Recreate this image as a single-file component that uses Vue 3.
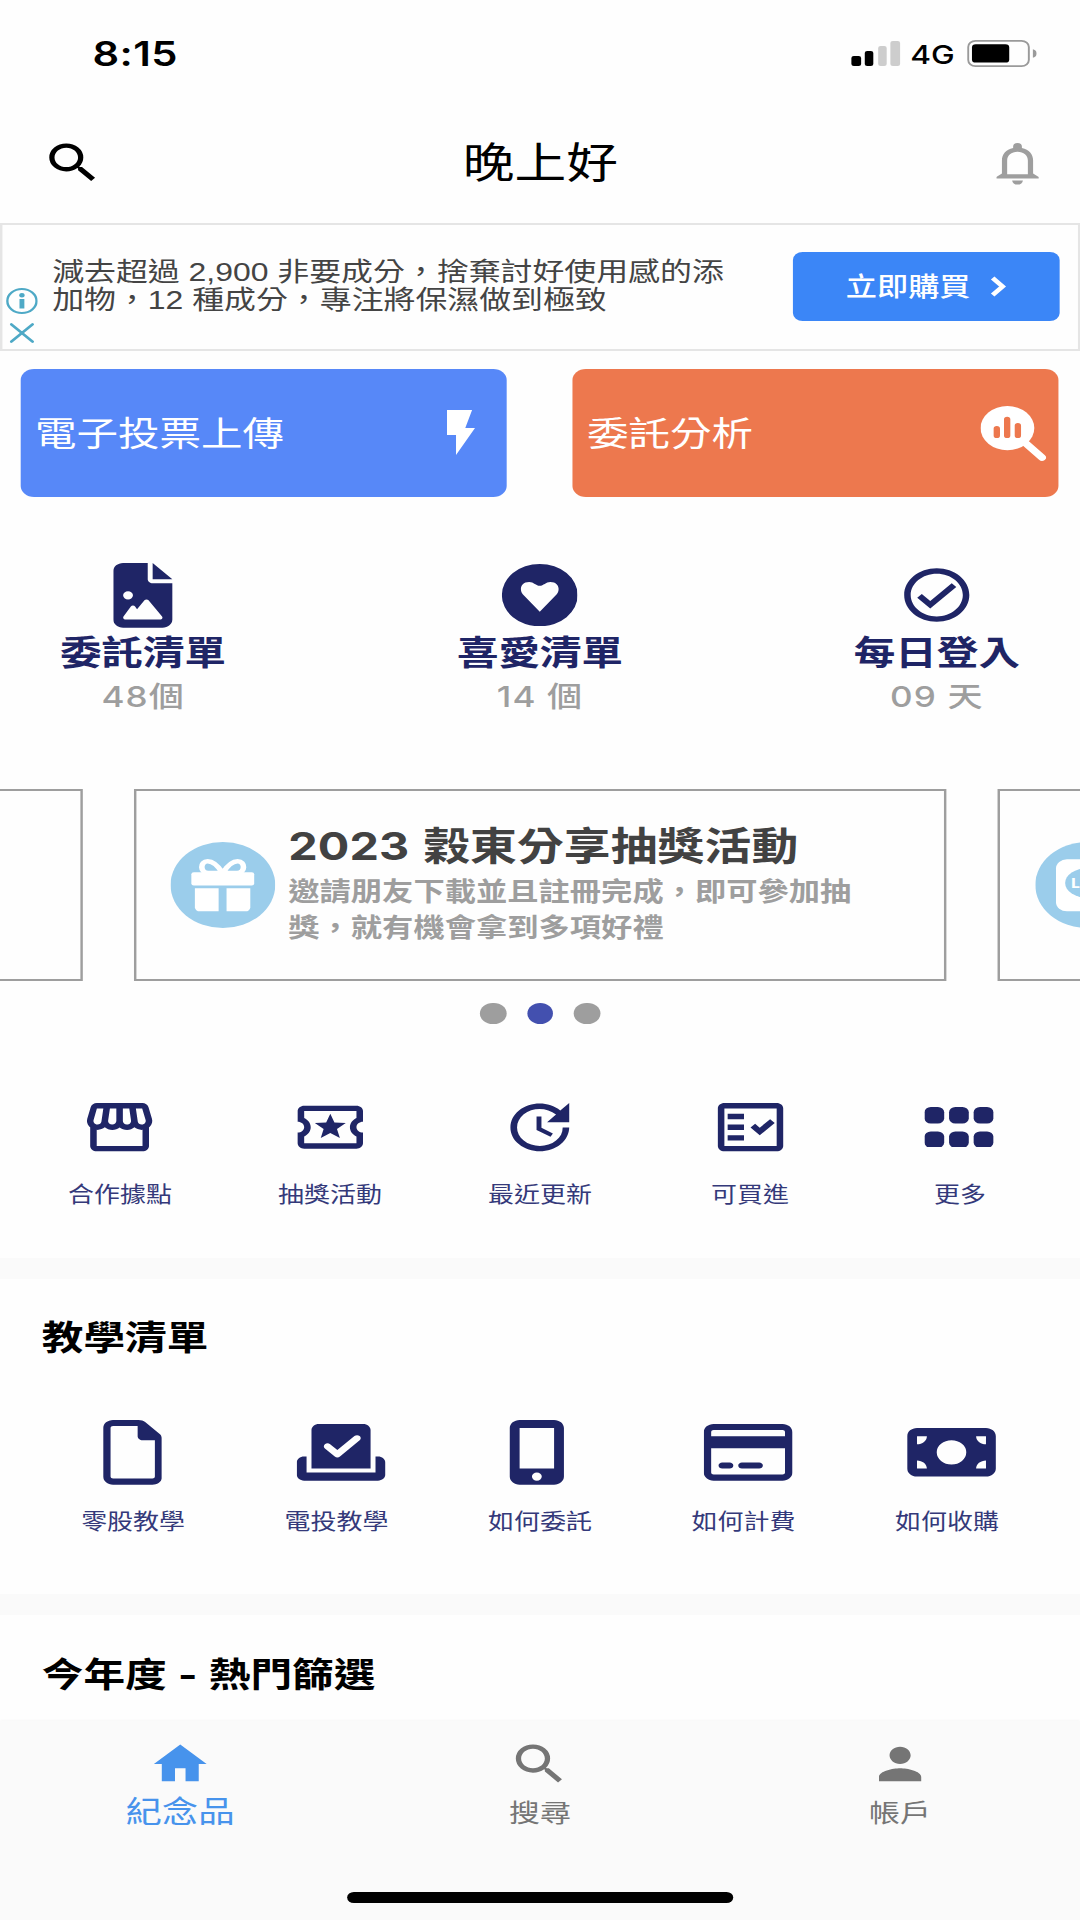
<script setup>
const stats = [
  {
    label: '委託清單',
    value: '48個',
    viewBox: '0 0 384 512',
    width: 48.5,
    height: 64.7,
    path: 'M64 0C28.7 0 0 28.7 0 64V448c0 35.3 28.7 64 64 64H320c35.3 0 64-28.7 64-64V160H256c-17.7 0-32-14.3-32-32V0H64zM256 0V128H384L256 0zM64 256a32 32 0 1 1 64 0 32 32 0 1 1 -64 0zm152 32c5.3 0 10.2 2.6 13.2 6.9l88 128c3.4 4.9 3.7 11.3 1 16.5s-8.2 8.6-14.2 8.6H216 176 128 80c-5.8 0-11.1-3.1-13.9-8.1s-2.8-11.2 .2-16.1l48-80c2.9-4.8 8.1-7.8 13.7-7.8s10.8 2.9 13.7 7.8l12.8 21.4 48.3-70.2c3-4.3 7.9-6.9 13.2-6.9z',
  },
  {
    label: '喜愛清單',
    value: '14 個',
    viewBox: '0 0 62 62',
    width: 62.3,
    height: 62.3,
    path: 'M31 0a31 31 0 1 0 0 62a31 31 0 1 0 0-62zM31 47.6L17.3 30.3C14.2 26.2 15 17.8 22.4 17.8C26 17.8 28 21.6 31 21.6S36 17.8 39.6 17.8C47 17.8 47.8 26.2 44.7 30.3Z',
  },
  {
    label: '每日登入',
    value: '09 天',
    viewBox: '0 0 24 24',
    width: 64.2,
    height: 64.2,
    path: 'M12 2C6.48 2 2 6.48 2 12s4.48 10 10 10 10-4.48 10-10S17.52 2 12 2zm0 18c-4.41 0-8-3.59-8-8s3.59-8 8-8 8 3.59 8 8-3.59 8-8 8zm4.59-12.42L10 14.17l-2.59-2.58L6 13l4 4 8-8z',
  },
]

const shortcuts = [
  {
    label: '合作據點',
    path: 'M21.9 8.89l-1.05-4.37c-.22-.9-1-1.52-1.91-1.52H5.05c-.9 0-1.69.63-1.9 1.52L2.1 8.89c-.24 1.02-.02 2.06.62 2.88.08.11.19.19.28.29V19c0 1.1.9 2 2 2h14c1.1 0 2-.9 2-2v-6.94c.09-.09.2-.18.28-.28.64-.82.87-1.87.62-2.89zm-2.99-3.9l1.05 4.37c.1.42.01.84-.25 1.17-.14.18-.44.47-.94.47-.61 0-1.14-.49-1.21-1.14L16.98 5l1.93-.01zM13 5h1.96l.54 4.52c.05.39-.07.78-.33 1.07-.22.26-.54.41-.95.41-.67 0-1.22-.59-1.22-1.31V5zM8.49 9.52L9.04 5H11v4.69c0 .72-.55 1.31-1.29 1.31-.34 0-.65-.15-.89-.41-.25-.29-.37-.68-.33-1.07zm-4.45-.16L5.05 5h1.97l-.58 4.86c-.08.65-.6 1.14-1.21 1.14-.49 0-.8-.29-.93-.47-.27-.32-.36-.75-.26-1.17zM5 19v-6.03c.08.01.15.03.23.03.87 0 1.66-.36 2.24-.95.6.6 1.4.95 2.31.95.87 0 1.65-.36 2.23-.93.59.57 1.39.93 2.29.93.84 0 1.64-.35 2.24-.95.58.59 1.37.95 2.24.95.08 0 .15-.02.23-.03V19H5z',
  },
  {
    label: '抽獎活動',
    path: 'M22 10V6c0-1.11-.9-2-2-2H4c-1.1 0-1.99.89-1.99 2v4c1.1 0 1.99.9 1.99 2s-.89 2-2 2v4c0 1.1.9 2 2 2h16c1.1 0 2-.9 2-2v-4c-1.1 0-2-.9-2-2s.9-2 2-2zm-2-1.46c-1.19.69-2 1.99-2 3.46s.81 2.77 2 3.46V18H4v-2.54c1.19-.69 2-1.99 2-3.46 0-1.48-.8-2.77-1.99-3.46L4 6h16v2.54zM9.07 16L12 14.12 14.93 16l-.89-3.36 2.69-2.2-3.47-.21L12 7l-1.27 3.22-3.47.21 2.69 2.2z',
  },
  {
    label: '最近更新',
    path: 'M21 10.12h-6.78l2.74-2.82c-2.73-2.7-7.15-2.8-9.88-.1-2.73 2.71-2.73 7.08 0 9.79s7.15 2.71 9.88 0C18.32 15.65 19 14.08 19 12.1h2c0 1.98-.88 4.55-2.64 6.29-3.51 3.48-9.21 3.48-12.72 0-3.5-3.47-3.53-9.11-.02-12.58s9.14-3.47 12.65 0L21 3v7.12zM12.5 8v4.25l3.5 2.08-.72 1.21L11 13V8h1.5z',
  },
  {
    label: '可買進',
    path: 'M20 3H4c-1.1 0-2 .9-2 2v14c0 1.1.9 2 2 2h16c1.1 0 2-.9 2-2V5c0-1.1-.9-2-2-2zm0 16H4V5h16v14zM19.41 10.42L17.99 9l-3.17 3.17-1.41-1.42L12 12.16 14.82 15zM5 7h5v2H5zM5 11h5v2H5zM5 15h5v2H5z',
  },
  { label: '更多', grid: true },
]

const lessons = [
  {
    label: '零股教學',
    width: 384,
    shift: -0.3,
    path: 'M320 464c8.8 0 16-7.2 16-16V160H256c-17.7 0-32-14.3-32-32V48H64c-8.8 0-16 7.2-16 16V448c0 8.8 7.2 16 16 16H320zM0 64C0 28.7 28.7 0 64 0H229.5c17 0 33.3 6.7 45.3 18.7l90.5 90.5c12 12 18.7 28.3 18.7 45.3V448c0 35.3-28.7 64-64 64H64c-35.3 0-64-28.7-64-64V64z',
  },
  {
    label: '電投教學',
    width: 576,
    shift: 3.6,
    path: 'M96 80c0-26.5 21.5-48 48-48H432c26.5 0 48 21.5 48 48V384H96V80zm313 47c-9.4-9.4-24.6-9.4-33.9 0l-111 111-47-47c-9.4-9.4-24.6-9.4-33.9 0s-9.4 24.6 0 33.9l64 64c9.4 9.4 24.6 9.4 33.9 0L409 161c9.4-9.4 9.4-24.6 0-33.9zM0 336c0-26.5 21.5-48 48-48H64V416H512V288h16c26.5 0 48 21.5 48 48v96c0 26.5-21.5 48-48 48H48c-26.5 0-48-21.5-48-48V336z',
  },
  {
    label: '如何委託',
    width: 384,
    shift: -2.5,
    path: 'M16 64C16 28.7 44.7 0 80 0H304c35.3 0 64 28.7 64 64V448c0 35.3-28.7 64-64 64H80c-35.3 0-64-28.7-64-64V64zM224 448a32 32 0 1 0 -64 0 32 32 0 1 0 64 0zM304 64H80V384H304V64z',
  },
  {
    label: '如何計費',
    width: 576,
    shift: 3.8,
    path: 'M512 80c8.8 0 16 7.2 16 16v32H48V96c0-8.8 7.2-16 16-16H512zm16 144V416c0 8.8-7.2 16-16 16H64c-8.8 0-16-7.2-16-16V224H528zM64 32C28.7 32 0 60.7 0 96V416c0 35.3 28.7 64 64 64H512c35.3 0 64-28.7 64-64V96c0-35.3-28.7-64-64-64H64zm56 304c-13.3 0-24 10.7-24 24s10.7 24 24 24h48c13.3 0 24-10.7 24-24s-10.7-24-24-24H120zm128 0c-13.3 0-24 10.7-24 24s10.7 24 24 24H360c13.3 0 24-10.7 24-24s-10.7-24-24-24H248z',
  },
  {
    label: '如何收購',
    width: 576,
    shift: 3.8,
    path: 'M64 64C28.7 64 0 92.7 0 128V384c0 35.3 28.7 64 64 64H512c35.3 0 64-28.7 64-64V128c0-35.3-28.7-64-64-64H64zm64 320H64V320c35.3 0 64 28.7 64 64zM64 192V128h64c0 35.3-28.7 64-64 64zM448 384c0-35.3 28.7-64 64-64v64H448zm64-192c-35.3 0-64-28.7-64-64h64v64zM288 160a96 96 0 1 1 0 192 96 96 0 1 1 0-192z',
  },
]

const searchPath =
  'M15.5 14h-.79l-.28-.27A6.471 6.471 0 0 0 16 9.5 6.5 6.5 0 1 0 9.5 16c1.61 0 3.09-.59 4.23-1.57l.27.28v.79l5 4.99L20.49 19l-4.99-5zm-6 0C7.01 14 5 11.99 5 9.5S7.01 5 9.5 5 14 7.01 14 9.5 11.99 14 9.5 14z'

const tabs = [
  { label: '紀念品', active: true, path: 'M10 20v-6h4v6h5v-8h3L12 3 2 12h3v8z' },
  { label: '搜尋', path: searchPath },
  {
    label: '帳戶',
    path: 'M12 12c2.21 0 4-1.79 4-4s-1.79-4-4-4-4 1.79-4 4 1.79 4 4 4zm0 2c-2.67 0-8 1.34-8 4v2h16v-2c0-2.66-5.33-4-8-4z',
  },
]
</script>

<template>
  <div class="viewport">
    <div class="screen" lang="zh-Hant">
      <div class="status">
        <span class="clock">8:15</span>
        <div class="signal">
          <i class="bar b1"></i><i class="bar b2"></i><i class="bar b3"></i><i class="bar b4"></i>
        </div>
        <span class="network">4G</span>
        <svg class="battery" width="57.3" height="27" viewBox="0 0 57.3 27">
          <rect x="0.9" y="0.9" width="49.8" height="25.2" rx="6" fill="none" stroke="#9a9a9a" stroke-width="1.6" />
          <rect x="4" y="4.2" width="30.6" height="18.4" rx="3.2" />
          <path d="M54 9.3c2.4.9 3.3 2.4 3.3 4.2s-.9 3.3-3.3 4.2z" fill="#9a9a9a" />
        </svg>
      </div>

      <header class="header">
        <svg class="search" width="51.6" height="51.6" viewBox="0 0 24 24"><path :d="searchPath" /></svg>
        <h1>晚上好</h1>
        <svg class="bell" width="34.8" height="41.6" viewBox="0 0 34.8 41.6">
          <path fill-rule="evenodd" d="M17.4 0a3.6 3.6 0 0 1 3.6 3.6v1.3C27 6.5 30.2 11.4 30.2 17.5V30.6L34.8 34v1.5H0V34L4.6 30.6V17.5C4.6 11.4 7.8 6.5 13.8 4.9V3.6A3.6 3.6 0 0 1 17.4 0ZM8.9 31.2H25.9V17.5C25.9 12.5 22.5 8.8 17.4 8.8S8.9 12.5 8.9 17.5Z" />
          <path d="M13 37.6H21.8A4.4 4 0 0 1 13 37.6Z" />
        </svg>
      </header>

      <section class="ad">
        <div class="ad-marks">
          <svg width="26" height="26" viewBox="0 0 26 26">
            <circle cx="13" cy="13" r="12" fill="none" stroke="#4ea9c6" stroke-width="2" />
            <circle cx="13" cy="7.2" r="2.2" fill="#4ea9c6" />
            <rect x="11" y="11" width="4" height="9.5" fill="#4ea9c6" />
          </svg>
          <svg width="20" height="20" viewBox="0 0 20 20">
            <path d="M1.3 1.3 18.7 18.7M18.7 1.3 1.3 18.7" stroke="#4ea9c6" stroke-width="2.4" stroke-linecap="round" />
          </svg>
        </div>
        <p class="ad-text">減去超過 2,900 非要成分，捨棄討好使用感的添<br />加物，12 種成分，專注將保濕做到極致</p>
        <div class="cta">
          <span>立即購買</span>
          <svg width="13" height="21" viewBox="0 0 13 21">
            <path d="M2 2 10.2 10.5 2 19" fill="none" stroke="#fff" stroke-width="4" />
          </svg>
        </div>
      </section>

      <section class="actions">
        <div class="action blue">
          <span>電子投票上傳</span>
          <svg class="bolt" width="23" height="45" viewBox="0 0 23 45">
            <path d="M0 0H20.6L15 18H23L7.4 45V25H0Z" fill="#fff" />
          </svg>
        </div>
        <div class="action orange">
          <span>委託分析</span>
          <svg class="analysis" width="54" height="55" viewBox="0 0 54 55">
            <path d="M35 35 50.5 51.5" stroke="#fff" stroke-width="6.6" stroke-linecap="round" />
            <circle cx="22.1" cy="22.1" r="22.1" fill="#fff" />
            <path d="M13.4 22.5V29.5M21.9 13.3V29.5M30.7 19.5V29.5" stroke="#ed784e" stroke-width="5.2" stroke-linecap="round" />
          </svg>
        </div>
      </section>

      <section class="stats">
        <div v-for="s in stats" :key="s.label" class="stat">
          <div class="stat-icon">
            <svg :width="s.width" :height="s.height" :viewBox="s.viewBox"><path fill-rule="evenodd" :d="s.path" /></svg>
          </div>
          <strong>{{ s.label }}</strong>
          <span>{{ s.value }}</span>
        </div>
      </section>

      <section class="carousel">
        <article class="slide"></article>
        <article class="slide">
          <svg class="badge" width="86" height="86" viewBox="0 0 86 86">
            <circle cx="43" cy="43" r="43" fill="#9bcdeb" />
            <g fill="#fff">
              <rect x="17.1" y="30.3" width="51.6" height="13.2" rx="2" />
              <path d="M20 46.2H39.5V69.3H24A4 4 0 0 1 20 65.3Z" />
              <path d="M46 46.2H65.5V65.3A4 4 0 0 1 61.5 69.3H46Z" />
            </g>
            <path d="M42.8 31C39 24 35 19.3 30.5 19.3C24 19.3 24 31 31 31ZM42.8 31C46.6 24 50.6 19.3 55.1 19.3C61.6 19.3 61.6 31 54.6 31Z" fill="none" stroke="#fff" stroke-width="4.6" />
          </svg>
          <div class="slide-text">
            <h2>2023 穀東分享抽獎活動</h2>
            <p>邀請朋友下載並且註冊完成，即可參加抽<br />獎，就有機會拿到多項好禮</p>
          </div>
        </article>
        <article class="slide">
          <svg class="badge" width="86" height="86" viewBox="0 0 86 86">
            <circle cx="43" cy="43" r="43" fill="#9bcdeb" />
            <rect x="17" y="17.3" width="52" height="52" rx="9" fill="#fff" />
            <ellipse cx="43" cy="41" rx="18.5" ry="15" fill="#9bcdeb" />
            <text x="29.5" y="45.6" fill="#fff" font-size="12.5" font-weight="800">LINE</text>
          </svg>
        </article>
      </section>
      <div class="dots"><i></i><i class="on"></i><i></i></div>

      <section class="shortcuts">
        <div v-for="s in shortcuts" :key="s.label" class="cell">
          <div class="shortcut-icon">
            <svg v-if="s.grid" class="more" width="56.6" height="40.8" viewBox="0 0 56.6 40.8">
              <template v-for="r in 2" :key="r">
                <rect v-for="c in 3" :key="c" :x="(c - 1) * 20.2" :y="(r - 1) * 24.4" width="16.2" height="16.4" rx="5.2" />
              </template>
            </svg>
            <svg v-else width="64.4" height="64.4" viewBox="0 0 24 24"><path fill-rule="evenodd" :d="s.path" /></svg>
          </div>
          <span>{{ s.label }}</span>
        </div>
      </section>

      <section class="lessons">
        <h3>教學清單</h3>
        <div class="lesson-row">
          <div v-for="l in lessons" :key="l.label" class="cell">
            <div class="lesson-icon">
              <svg :width="l.width * 0.1264" height="64.7" :viewBox="`0 0 ${l.width} 512`" :style="{ transform: `translateX(${l.shift}px)` }">
                <path fill-rule="evenodd" :d="l.path" />
              </svg>
            </div>
            <span>{{ l.label }}</span>
          </div>
        </div>
      </section>

      <section class="trending">
        <h3>今年度 - 熱門篩選</h3>
      </section>

      <nav class="tabs">
        <div v-for="t in tabs" :key="t.label" class="tab" :class="{ active: t.active }">
          <svg width="52" height="52" viewBox="0 0 24 24"><path :d="t.path" /></svg>
          <span>{{ t.label }}</span>
        </div>
        <i class="indicator"></i>
      </nav>
    </div>
  </div>
</template>

<style>
body {
  margin: 0;
  background: #fefefe;
}
</style>

<style scoped>
.viewport {
  width: 1080px;
  height: 1920px;
  overflow: hidden;
}
.screen {
  width: 886.7px;
  height: 1920px;
  transform: scaleX(1.218);
  transform-origin: 0 0;
  display: flex;
  flex-direction: column;
  background: #fefefe;
  color: #000;
  font-family: Inter, "Noto Sans CJK TC", sans-serif;
}
.screen * {
  box-sizing: border-box;
}
h1, h2, h3, p {
  margin: 0;
}
svg {
  display: block;
  flex: none;
}
section, header, .status, .dots {
  flex: none;
}

.status {
  height: 101px;
  padding: 0 35.5px 0 76px;
  display: flex;
  align-items: flex-start;
}
.clock {
  margin-top: 33px;
  font-size: 34.2px;
  line-height: 41px;
  font-weight: 600;
  letter-spacing: 0.3px;
}
.signal {
  margin: 40.5px 0 0 auto;
  height: 25px;
  display: flex;
  align-items: flex-end;
  gap: 3.3px;
}
.bar {
  width: 7.4px;
  border-radius: 2px;
  background: #000;
}
.b1 { height: 10px; }
.b2 { height: 14.5px; }
.b3 { height: 19.5px; background: #cdcdcd; }
.b4 { height: 25px; background: #cdcdcd; }
.network {
  margin: 39px 0 0 8.6px;
  font-size: 26px;
  line-height: 32px;
  font-weight: 500;
}
.battery {
  margin: 39.5px 0 0 10px;
}

.header {
  height: 122px;
  padding: 2px 33.6px 0 34.3px;
  display: flex;
  align-items: center;
  justify-content: space-between;
}
.search { margin-right: -16.8px; }
.bell { fill: #9e9e9e; margin-top: 2px; }
h1 {
  font-size: 42.5px;
  line-height: 56px;
  font-weight: 400;
}

.ad {
  height: 128px;
  border: 2px solid #e5e5e5;
  border-width: 2px 2.4px;
  display: flex;
  align-items: flex-start;
}
.ad-marks {
  width: 26px;
  margin: 63px 0 0 3px;
  display: flex;
  flex-direction: column;
  align-items: center;
  gap: 9px;
}
.ad-text {
  margin: 34px 0 0 11.8px;
  font-family: "Liberation Sans", "Noto Sans CJK TC", sans-serif;
  font-size: 26.2px;
  line-height: 27.8px;
  color: #444;
  white-space: nowrap;
}
.cta {
  width: 218.8px;
  height: 69px;
  margin: 27.4px 15.2px 0 auto;
  border-radius: 8px;
  background: #3b86f7;
  color: #fff;
  display: flex;
  align-items: center;
  justify-content: center;
  gap: 16px;
  font-size: 25.6px;
  line-height: 34px;
  font-weight: 500;
}

.actions {
  padding: 17.7px 17.3px 0;
  display: flex;
  justify-content: space-between;
}
.action {
  width: 399px;
  height: 128.3px;
  border-radius: 11px;
  color: #fff;
  display: flex;
  align-items: center;
  justify-content: space-between;
  font-size: 34.1px;
  line-height: 44px;
  padding-left: 11.5px;
}
.action span {
  margin-top: 2px;
}
.blue { background: #5788f8; }
.orange { background: #ed784e; }
.bolt { margin-right: 26.5px; }
.analysis { margin: 1px 10.5px 0 0; }

.stats {
  height: 291.7px;
  padding: 65px 49px 0;
  display: flex;
  justify-content: space-between;
  fill: #1f2566;
}
.stat {
  width: 137px;
  display: flex;
  flex-direction: column;
  align-items: center;
}
.stat-icon {
  height: 66.6px;
  display: flex;
  align-items: center;
}
.stat strong {
  margin-top: 4.8px;
  font-size: 34.1px;
  line-height: 40px;
  color: #1f2566;
  white-space: nowrap;
}
.stat span {
  margin-top: 7px;
  font-size: 28.8px;
  line-height: 34px;
  letter-spacing: 0.9px;
  font-weight: 500;
  color: #9e9e9e;
  white-space: nowrap;
}

.carousel {
  height: 192.6px;
  display: flex;
  justify-content: center;
  gap: 42.3px;
  overflow: hidden;
}
.slide {
  flex: none;
  width: 667px;
  border: 2px solid #9e9e9e;
  padding: 51px 0 0 28.5px;
  display: flex;
  align-items: flex-start;
}
.slide-text {
  margin: -22px 0 0 10.3px;
  white-space: nowrap;
}
h2 {
  font-size: 38.4px;
  line-height: 52px;
  word-spacing: 2.2px;
  color: #424242;
}
h2::first-line {
  letter-spacing: 0.1px;
}
.slide-text p {
  margin-top: 2.4px;
  font-size: 25.7px;
  line-height: 36px;
  font-weight: 700;
  color: #9e9e9e;
}

.dots {
  height: 42.9px;
  padding-top: 21.4px;
  display: flex;
  justify-content: center;
  gap: 17px;
}
.dots i {
  width: 21.5px;
  height: 21.5px;
  border-radius: 50%;
  background: #9e9e9e;
}
.dots .on { background: #4350af; }

.shortcuts {
  height: 255.3px;
  padding: 76.8px 12.3px 0;
  border-bottom: 21.5px solid #fafafa;
  display: flex;
}
.cell {
  flex: 1;
  display: flex;
  flex-direction: column;
  align-items: center;
  fill: #1f2566;
  color: #34397a;
}
.cell span {
  font-size: 21.3px;
  line-height: 26px;
  white-space: nowrap;
}
.shortcut-icon {
  height: 52px;
  margin-bottom: 28.2px;
  display: flex;
  align-items: center;
}
.more { margin-right: 1.6px; }

.lessons {
  height: 336px;
  padding-top: 37.8px;
  border-bottom: 21.2px solid #fafafa;
}
h3 {
  padding-left: 34.3px;
  font-size: 34.2px;
  line-height: 42px;
  word-spacing: 1.2px;
}
.lesson-row {
  padding: 60.3px 25.7px 0;
  display: flex;
}
.lesson-icon {
  height: 66px;
  margin-bottom: 22.1px;
  display: flex;
  align-items: center;
}

.trending {
  height: 106px;
  padding-top: 38.8px;
}

.tabs {
  flex: none;
  position: relative;
  height: 198.5px;
  background: #fafafa;
  box-shadow: 0 -1px 2px rgba(0, 0, 0, 0.03);
  display: flex;
}
.tab {
  flex: 1;
  padding-top: 16.5px;
  display: flex;
  flex-direction: column;
  align-items: center;
  fill: #757575;
  color: #757575;
}
.tab span {
  margin-top: 4.5px;
  font-size: 25.4px;
  line-height: 38px;
}
.tab.active {
  fill: #4793ec;
  color: #4793ec;
}
.tab.active span {
  margin-top: 2px;
  font-size: 29.9px;
}
.indicator {
  position: absolute;
  left: 50%;
  bottom: 17.3px;
  width: 317px;
  height: 10.7px;
  margin-left: -158.5px;
  border-radius: 6px;
  background: #000;
}
</style>
